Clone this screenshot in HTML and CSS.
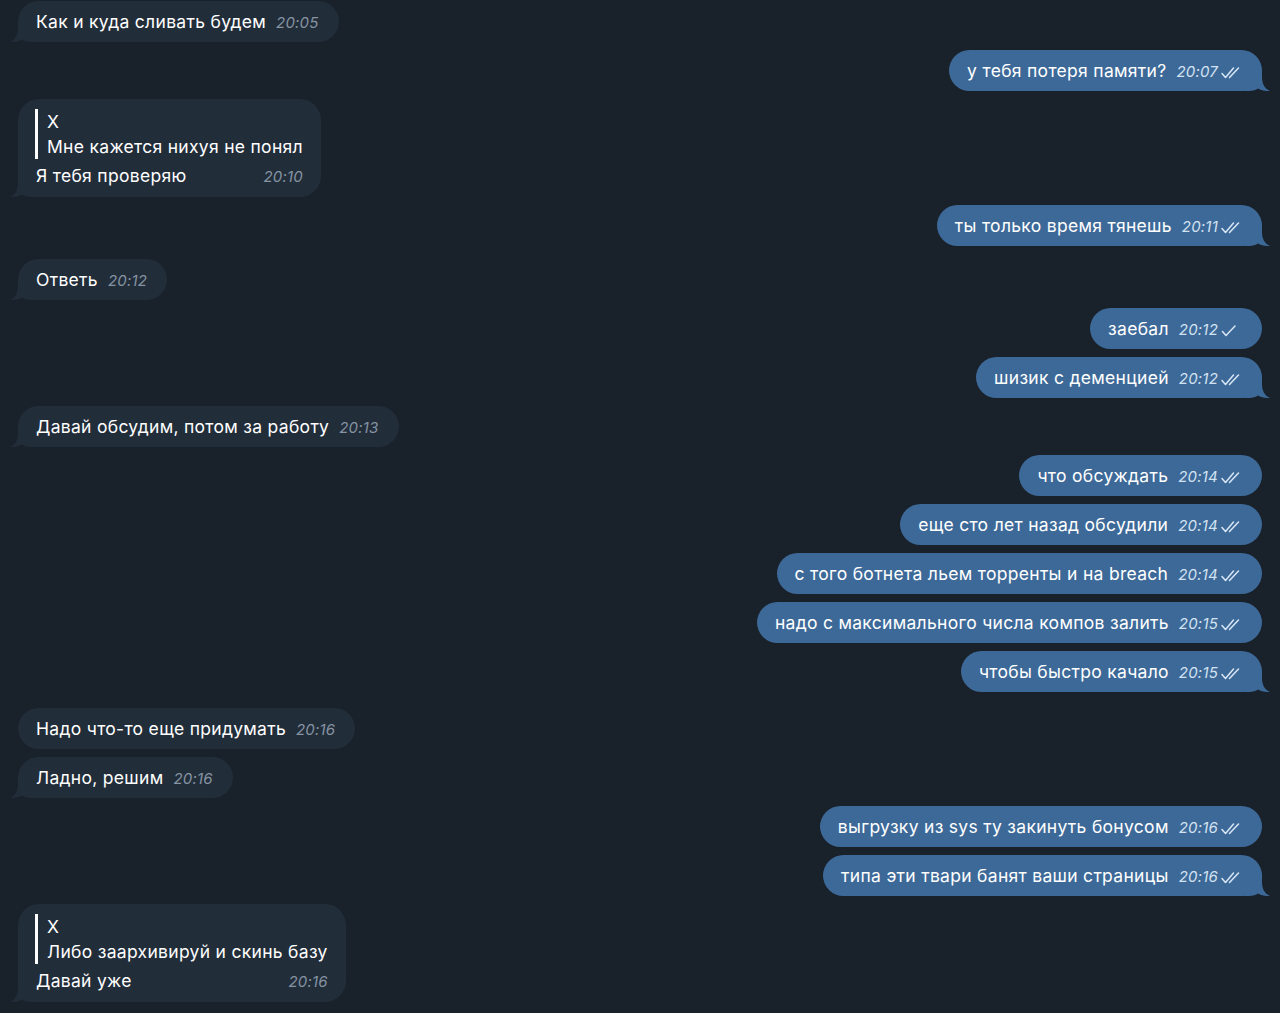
FILE: index.html
```html
<!DOCTYPE html>
<html lang="ru">
<head>
<meta charset="utf-8">
<link rel="stylesheet" href="styles.css">
</head>
<body>
<div class="chat">

  <div class="row in">
    <div class="bubble"><span class="text">Как и куда сливать будем</span><span class="meta"><span class="time">20:05</span></span>
      <svg class="tail" viewBox="0 0 26 22"><path d="M8 0H26V22H21C17 22 14 21 12 19.5C9 21.5 5 22 0 22C5 20 8 15 8 8Z"/></svg>
    </div>
  </div>

  <div class="row out">
    <div class="bubble"><span class="text">у тебя потеря памяти?</span><span class="meta"><span class="time">20:07</span><svg class="check dbl" viewBox="0 0 20 12"><path d="M1 6.5L4.5 10.5L12.5 1M8.5 10.5L17.5 1"/></svg></span>
      <svg class="tail" viewBox="0 0 26 22"><path d="M8 0H26V22H21C17 22 14 21 12 19.5C9 21.5 5 22 0 22C5 20 8 15 8 8Z"/></svg>
    </div>
  </div>

  <div class="row in">
    <div class="bubble reply">
      <div class="quote">
        <div class="q-name">Х</div>
        <div class="q-text">Мне кажется нихуя не понял</div>
      </div>
      <div class="main"><span class="text">Я тебя проверяю</span><span class="meta"><span class="time">20:10</span></span></div>
      <svg class="tail" viewBox="0 0 26 22"><path d="M8 0H26V22H21C17 22 14 21 12 19.5C9 21.5 5 22 0 22C5 20 8 15 8 8Z"/></svg>
    </div>
  </div>

  <div class="row out">
    <div class="bubble"><span class="text">ты только время тянешь</span><span class="meta"><span class="time">20:11</span><svg class="check dbl" viewBox="0 0 20 12"><path d="M1 6.5L4.5 10.5L12.5 1M8.5 10.5L17.5 1"/></svg></span>
      <svg class="tail" viewBox="0 0 26 22"><path d="M8 0H26V22H21C17 22 14 21 12 19.5C9 21.5 5 22 0 22C5 20 8 15 8 8Z"/></svg>
    </div>
  </div>

  <div class="row in sep-a">
    <div class="bubble"><span class="text">Ответь</span><span class="meta"><span class="time">20:12</span></span>
      <svg class="tail" viewBox="0 0 26 22"><path d="M8 0H26V22H21C17 22 14 21 12 19.5C9 21.5 5 22 0 22C5 20 8 15 8 8Z"/></svg>
    </div>
  </div>

  <div class="row out">
    <div class="bubble"><span class="text">заебал</span><span class="meta"><span class="time">20:12</span><svg class="check sgl" viewBox="0 0 16 12"><path d="M1.5 6.5L5 10.5L14 1"/></svg></span></div>
  </div>

  <div class="row out">
    <div class="bubble"><span class="text">шизик с деменцией</span><span class="meta"><span class="time">20:12</span><svg class="check dbl" viewBox="0 0 20 12"><path d="M1 6.5L4.5 10.5L12.5 1M8.5 10.5L17.5 1"/></svg></span>
      <svg class="tail" viewBox="0 0 26 22"><path d="M8 0H26V22H21C17 22 14 21 12 19.5C9 21.5 5 22 0 22C5 20 8 15 8 8Z"/></svg>
    </div>
  </div>

  <div class="row in">
    <div class="bubble"><span class="text">Давай обсудим, потом за работу</span><span class="meta"><span class="time">20:13</span></span>
      <svg class="tail" viewBox="0 0 26 22"><path d="M8 0H26V22H21C17 22 14 21 12 19.5C9 21.5 5 22 0 22C5 20 8 15 8 8Z"/></svg>
    </div>
  </div>

  <div class="row out">
    <div class="bubble"><span class="text">что обсуждать</span><span class="meta"><span class="time">20:14</span><svg class="check dbl" viewBox="0 0 20 12"><path d="M1 6.5L4.5 10.5L12.5 1M8.5 10.5L17.5 1"/></svg></span></div>
  </div>

  <div class="row out">
    <div class="bubble"><span class="text">еще сто лет назад обсудили</span><span class="meta"><span class="time">20:14</span><svg class="check dbl" viewBox="0 0 20 12"><path d="M1 6.5L4.5 10.5L12.5 1M8.5 10.5L17.5 1"/></svg></span></div>
  </div>

  <div class="row out">
    <div class="bubble"><span class="text">с того ботнета льем торренты и на breach</span><span class="meta"><span class="time">20:14</span><svg class="check dbl" viewBox="0 0 20 12"><path d="M1 6.5L4.5 10.5L12.5 1M8.5 10.5L17.5 1"/></svg></span></div>
  </div>

  <div class="row out">
    <div class="bubble"><span class="text">надо с максимального числа компов залить</span><span class="meta"><span class="time">20:15</span><svg class="check dbl" viewBox="0 0 20 12"><path d="M1 6.5L4.5 10.5L12.5 1M8.5 10.5L17.5 1"/></svg></span></div>
  </div>

  <div class="row out">
    <div class="bubble"><span class="text">чтобы быстро качало</span><span class="meta"><span class="time">20:15</span><svg class="check dbl" viewBox="0 0 20 12"><path d="M1 6.5L4.5 10.5L12.5 1M8.5 10.5L17.5 1"/></svg></span>
      <svg class="tail" viewBox="0 0 26 22"><path d="M8 0H26V22H21C17 22 14 21 12 19.5C9 21.5 5 22 0 22C5 20 8 15 8 8Z"/></svg>
    </div>
  </div>

  <div class="row in sep-b">
    <div class="bubble"><span class="text">Надо что-то еще придумать</span><span class="meta"><span class="time">20:16</span></span></div>
  </div>

  <div class="row in">
    <div class="bubble"><span class="text">Ладно, решим</span><span class="meta"><span class="time">20:16</span></span>
      <svg class="tail" viewBox="0 0 26 22"><path d="M8 0H26V22H21C17 22 14 21 12 19.5C9 21.5 5 22 0 22C5 20 8 15 8 8Z"/></svg>
    </div>
  </div>

  <div class="row out">
    <div class="bubble"><span class="text">выгрузку из sys ту закинуть бонусом</span><span class="meta"><span class="time">20:16</span><svg class="check dbl" viewBox="0 0 20 12"><path d="M1 6.5L4.5 10.5L12.5 1M8.5 10.5L17.5 1"/></svg></span></div>
  </div>

  <div class="row out">
    <div class="bubble"><span class="text">типа эти твари банят ваши страницы</span><span class="meta"><span class="time">20:16</span><svg class="check dbl" viewBox="0 0 20 12"><path d="M1 6.5L4.5 10.5L12.5 1M8.5 10.5L17.5 1"/></svg></span>
      <svg class="tail" viewBox="0 0 26 22"><path d="M8 0H26V22H21C17 22 14 21 12 19.5C9 21.5 5 22 0 22C5 20 8 15 8 8Z"/></svg>
    </div>
  </div>

  <div class="row in">
    <div class="bubble reply">
      <div class="quote">
        <div class="q-name">Х</div>
        <div class="q-text">Либо заархивируй и скинь базу</div>
      </div>
      <div class="main"><span class="text">Давай уже</span><span class="meta"><span class="time">20:16</span></span></div>
      <svg class="tail" viewBox="0 0 26 22"><path d="M8 0H26V22H21C17 22 14 21 12 19.5C9 21.5 5 22 0 22C5 20 8 15 8 8Z"/></svg>
    </div>
  </div>

</div>
</body>
</html>
```

FILE: styles.css
```css
html, body {
  margin: 0;
  padding: 0;
  background: #19212b;
  height: 100%;
  overflow: hidden;
}

body {
  font-family: "Inter", "Noto Sans", "DejaVu Sans", sans-serif;
  color: #ffffff;
}

.chat {
  display: flex;
  flex-direction: column;
  padding: 1px 18px 0 18px;
}

.row {
  display: flex;
  margin-top: 8px;
}

.row:first-child {
  margin-top: 0;
}

.row.sep-a {
  margin-top: 13px;
}

.row.sep-b {
  margin-top: 16px;
}

.row.in {
  justify-content: flex-start;
}

.row.out {
  justify-content: flex-end;
}

.bubble {
  position: relative;
  display: flex;
  align-items: baseline;
  gap: 10px;
  height: 41px;
  box-sizing: border-box;
  padding: 10px 20px 9px 18px;
  border-radius: 21px;
  font-size: 17.5px;
  line-height: 22px;
}

.in .bubble {
  background: #222d3a;
}

.out .bubble {
  background: #3d6998;
  padding-right: 21px;
}

.text {
  white-space: nowrap;
  letter-spacing: 0.3px;
}

.meta {
  display: inline-flex;
  align-items: center;
  gap: 3px;
  white-space: nowrap;
}

.time {
  font-size: 15px;
  font-style: italic;
  letter-spacing: 0.2px;
}

.in .time {
  color: #8593a2;
}

.out .time {
  color: #d3e2f2;
}

.check {
  fill: none;
  stroke: #d8e6f5;
  stroke-width: 1.5;
  stroke-linecap: round;
  stroke-linejoin: round;
  position: relative;
  top: 1px;
}

.check.dbl {
  width: 20px;
  height: 12px;
}

.check.sgl {
  width: 16px;
  height: 12px;
  margin-right: 4px;
}

.tail {
  position: absolute;
  bottom: 0;
  width: 26px;
  height: 22px;
}

.in .tail {
  left: -8px;
  fill: #222d3a;
}

.out .tail {
  right: -8px;
  fill: #3d6998;
  transform: scaleX(-1);
}

/* reply bubble */
.bubble.reply {
  display: block;
  height: 98px;
  padding: 10px 18px 9px 18px;
}

.quote {
  border-left: 3px solid #ffffff;
  padding-left: 9px;
  margin-left: -1px;
}

.q-name,
.q-text {
  line-height: 25px;
  white-space: nowrap;
  letter-spacing: 0.3px;
}

.main {
  display: flex;
  align-items: baseline;
  justify-content: space-between;
  gap: 20px;
  margin-top: 6px;
}
```
